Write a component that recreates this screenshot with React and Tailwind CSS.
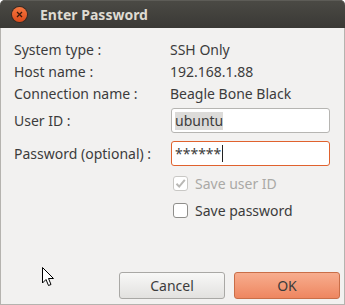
import React from 'react';

const font = { fontFamily: '"Noto Sans", "DejaVu Sans", sans-serif' };

const InfoRow = ({ label, value }) => (
  <div className="flex h-[22px] items-center">
    <span className="w-[156px]">{label}</span>
    <span>{value}</span>
  </div>
);

const Checkbox = ({ checked, disabled, label }) => (
  <div className={`flex h-[27px] items-center gap-[7px] ${disabled ? 'text-[#aaa9a6]' : 'text-[#3c3c3c]'}`}>
    <span
      className={`flex h-[15px] w-[15px] items-center justify-center rounded-[3px] border bg-white ${
        disabled ? 'border-[#c9c8c5] bg-[#eceae8]' : 'border-[#8f8e8b]'
      }`}
    >
      {checked && (
        <svg width="13" height="13" viewBox="0 0 13 13">
          <path d="M2.5 6.8 L5.2 9.6 L10.8 2.8" fill="none" stroke="#b9b8b5" strokeWidth="2" />
        </svg>
      )}
    </span>
    <span>{label}</span>
  </div>
);

const App = () => {
  return (
    <div className="relative h-[305px] w-[345px] overflow-hidden bg-white text-[14px] text-[#3c3c3c]" style={font}>
      <div className="flex h-[28px] items-center gap-[13px] rounded-t-[5px] bg-gradient-to-b from-[#4b4a45] to-[#3a3935] pl-[12px] shadow-[inset_0_1px_0_#5d5c57]">
        <span className="flex h-[15px] w-[15px] items-center justify-center rounded-full bg-gradient-to-b from-[#f7773f] to-[#dc4a1a] shadow-[0_0_0_1px_#3a2a22]">
          <svg width="7" height="7" viewBox="0 0 7 7">
            <path d="M1 1 L6 6 M6 1 L1 6" stroke="#3b1a0c" strokeWidth="1.3" />
          </svg>
        </span>
        <span className="text-[14px] font-bold text-[#dfdbd2]" style={font}>Enter Password</span>
      </div>

      <div className="flex h-[277px] flex-col border-x border-b border-[#b5b3af] bg-[#f2f1f0] pl-[13px] pt-[10px]">
        <InfoRow label="System type :" value="SSH Only" />
        <InfoRow label="Host name :" value="192.168.1.88" />
        <InfoRow label="Connection name :" value="Beagle Bone Black" />

        <div className="mt-[4px] flex items-center">
          <span className="w-[157px]">User ID :</span>
          <div className="flex h-[25px] w-[159px] items-center rounded-[3px] border border-[#b6b5b2] bg-white px-[3px]">
            <span className="bg-[#dcdbd9] leading-[18px]">ubuntu</span>
          </div>
        </div>

        <div className="mt-[8px] flex items-center">
          <span className="w-[157px]">Password (optional) :</span>
          <div className="flex h-[25px] w-[159px] items-center rounded-[3px] border border-[#e0622e] bg-white px-[3px]">
            <span>******</span>
            <span className="ml-px h-[17px] w-px bg-[#222]" />
          </div>
        </div>

        <div className="ml-[159px] mt-[4px] flex flex-col">
          <Checkbox checked disabled label="Save user ID" />
          <Checkbox label="Save password" />
        </div>

        <div className="mt-auto mb-[5px] flex justify-end gap-[9px] pr-[4px]">
          <button className="h-[27px] w-[106px] rounded-[3px] border border-[#a9a8a5] bg-gradient-to-b from-[#f8f8f7] to-[#e2e1df] text-[#3c3c3c]" style={font}>
            Cancel
          </button>
          <button className="h-[27px] w-[106px] rounded-[3px] border border-[#c96e48] bg-gradient-to-b from-[#f7ad8e] to-[#ee8660] text-[#3c3c3c]" style={font}>
            OK
          </button>
        </div>
      </div>

      <svg className="absolute left-[42px] top-[267px]" width="13" height="20" viewBox="0 0 13 20">
        <path d="M0.5 0.5 L0.5 16 L4 12.5 L6.5 18.5 L9 17.5 L6.5 11.5 L11.5 11.5 Z" fill="#fff" stroke="#000" strokeWidth="1" />
      </svg>
    </div>
  );
};

export default App;
